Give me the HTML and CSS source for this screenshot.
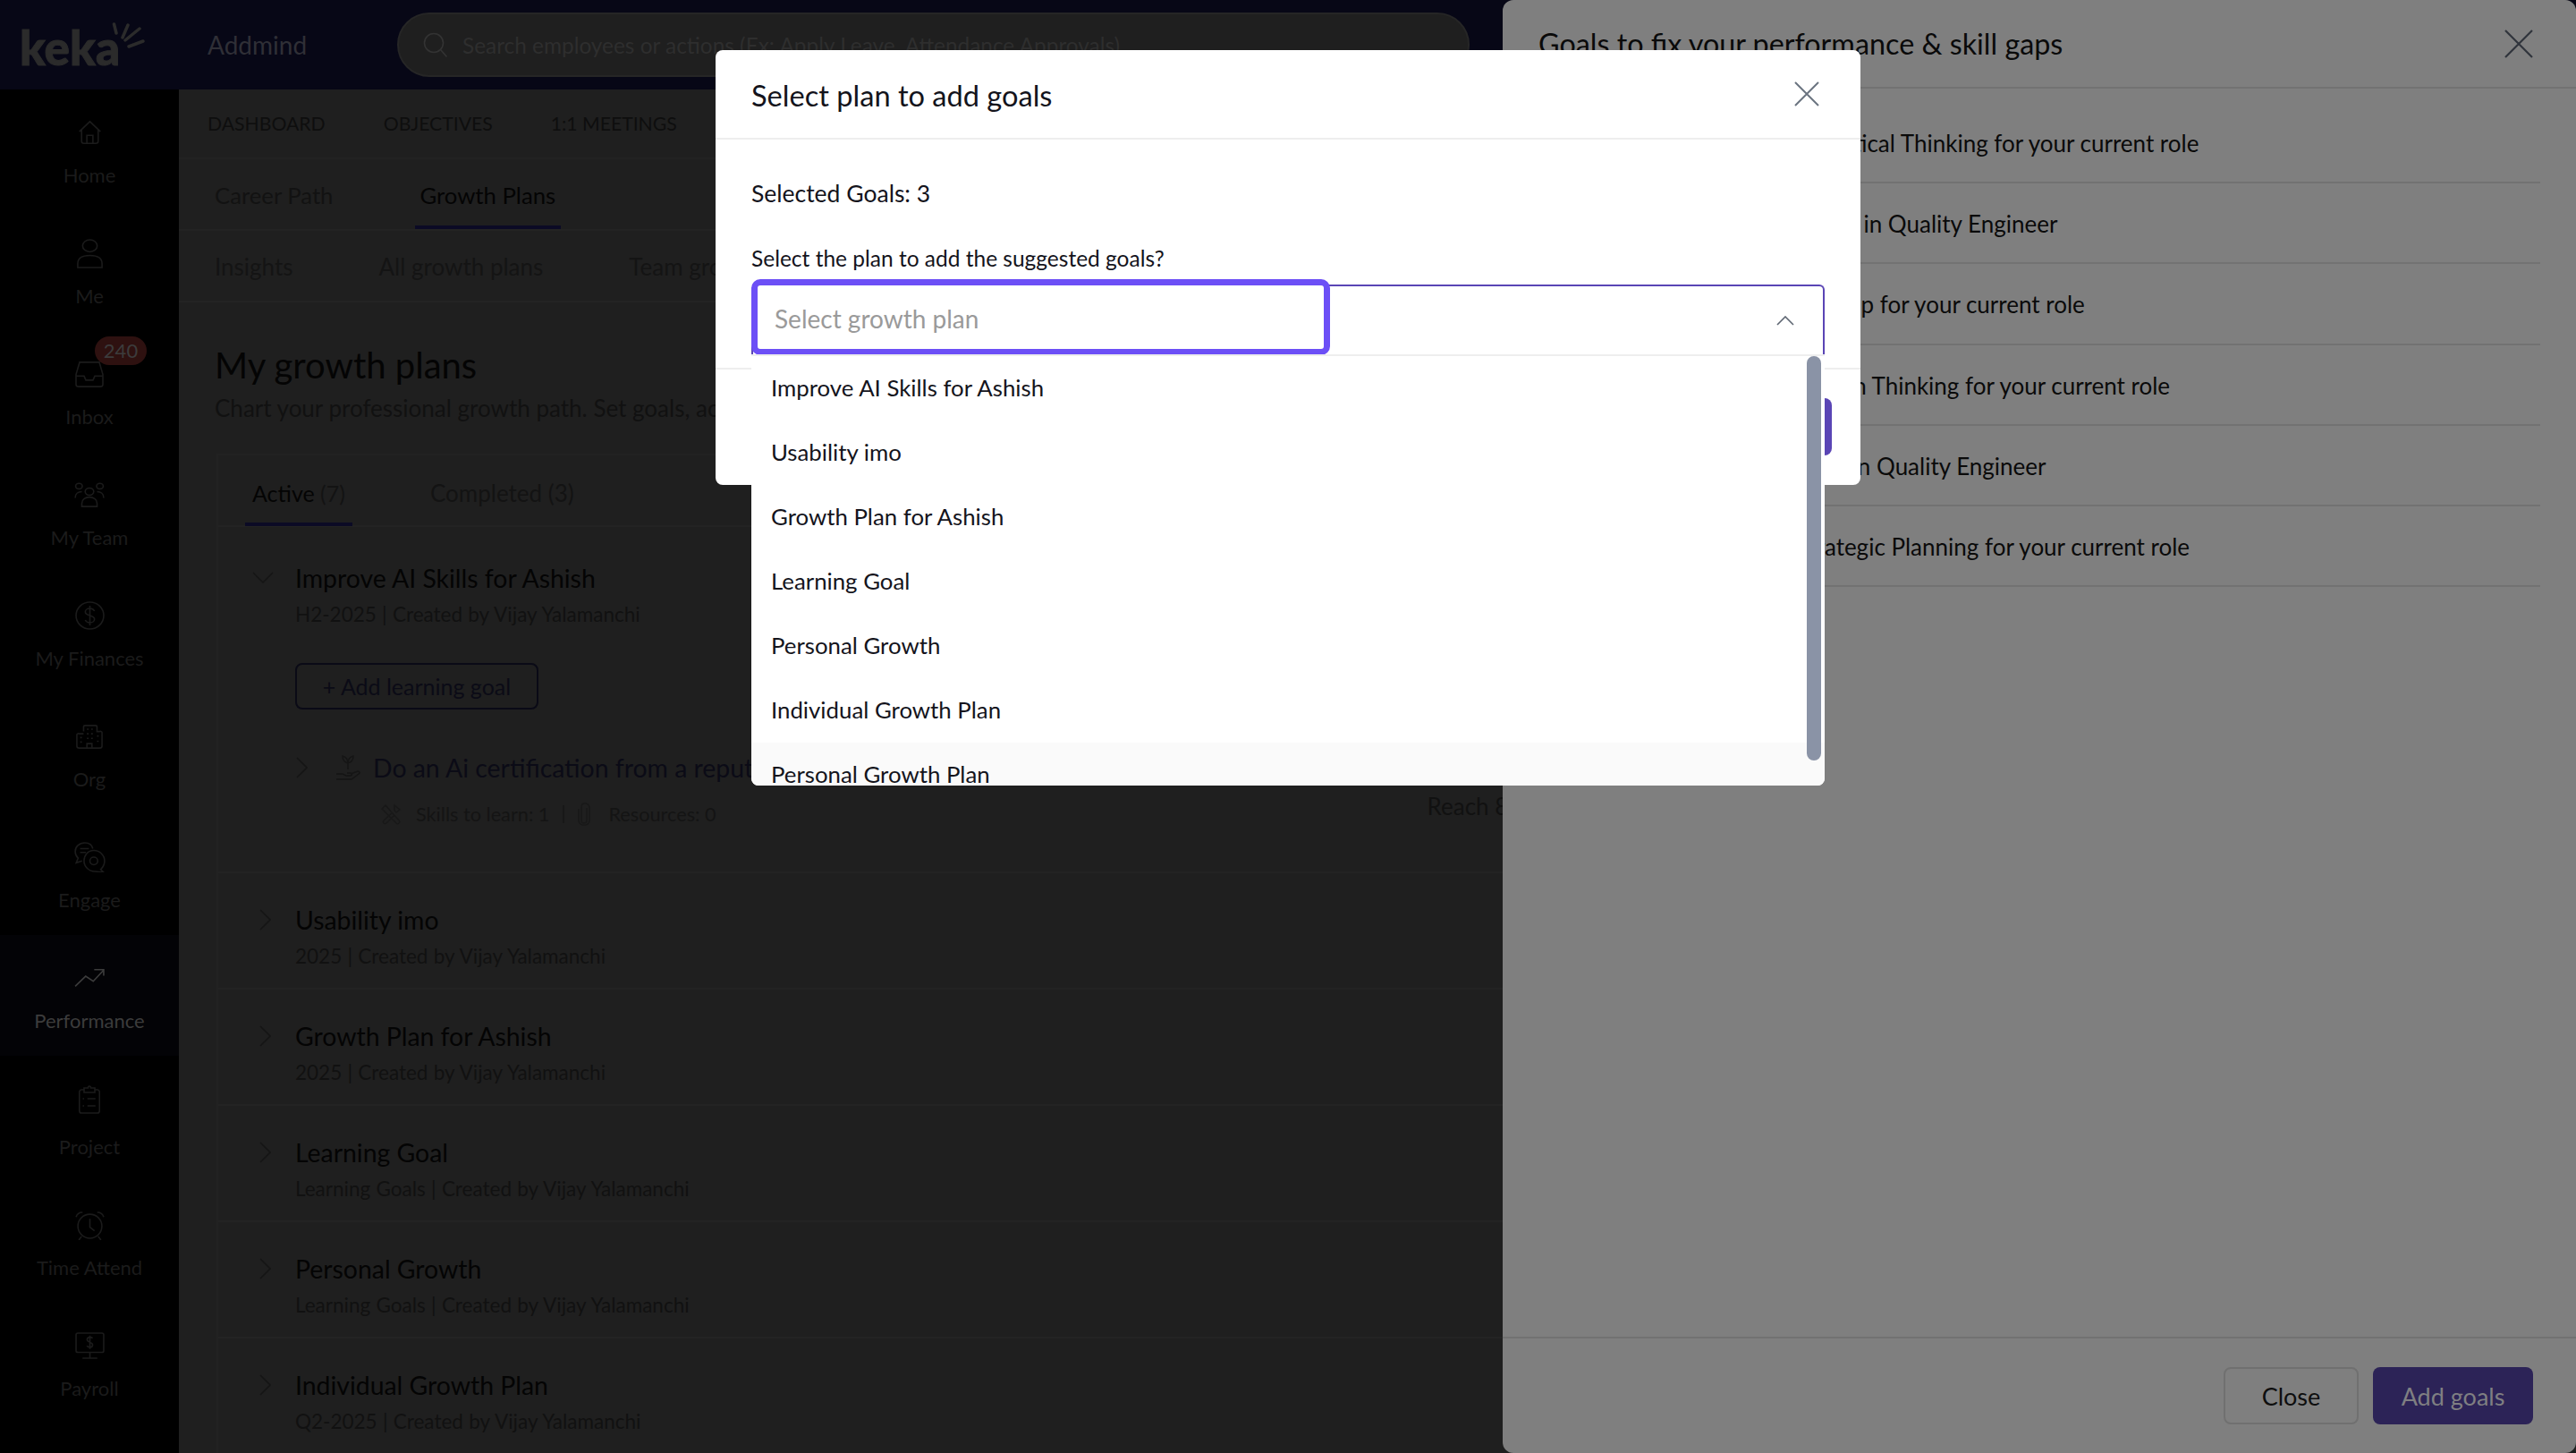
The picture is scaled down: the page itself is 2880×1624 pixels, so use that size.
FILE: index.html
```html
<!DOCTYPE html>
<html lang="en">
<head>
    <meta charset="UTF-8">
    <meta name="viewport" content="width=device-width, initial-scale=1.0">
    <title>Growth Plans</title>
    <link rel="stylesheet" href="styles.css">
</head>
<body>
    <div class="app">
        <header class="topbar">
            <div class="logo">
                <span class="logo-text">keka</span>
                <svg class="logo-rays" viewBox="0 0 38 30" width="38" height="30"><path d="M2.5 2l2.5 10M18 3l-6 14M31 7L15 20M35 21l-16 6"/></svg>
            </div>
            <div class="org-name">Addmind</div>
            <div class="search">
                <svg class="search-icon" viewBox="0 0 28 28" width="28" height="28"><circle cx="12" cy="12" r="10.5"/><path d="M19.5 19.5l7 8"/></svg>
                <span>Search employees or actions (Ex: Apply Leave, Attendance Approvals)</span>
            </div>
        </header>

        <div class="layout">
            <nav class="sidebar">
                <a class="nav-item">
                    <svg class="i-home" viewBox="0 0 32 32" preserveAspectRatio="none"><path d="M2 15L16 1l14 14M5 12v16a3 3 0 0 0 3 3h16a3 3 0 0 0 3-3V12M12 31V20h8v11"/></svg>
                    <span>Home</span>
                </a>
                <a class="nav-item">
                    <svg class="i-me" viewBox="0 0 32 32" preserveAspectRatio="none"><ellipse cx="16" cy="7.5" rx="9" ry="6.5"/><path d="M1 31v-4c0-6 6-9 15-9s15 3 15 9v4z"/></svg>
                    <span>Me</span>
                </a>
                <a class="nav-item">
                    <svg class="i-inbox" viewBox="0 0 32 32" preserveAspectRatio="none"><path d="M5 1h22l4 15v12a3 3 0 0 1-3 3H4a3 3 0 0 1-3-3V16zM1 18h9l2 5h8l2-5h9"/></svg>
                    <span class="badge">240</span>
                    <span>Inbox</span>
                </a>
                <a class="nav-item">
                    <svg class="i-team" viewBox="0 0 32 32" preserveAspectRatio="none"><circle cx="16" cy="12" r="4.5"/><circle cx="5" cy="5" r="3.5"/><circle cx="27" cy="5" r="3.5"/><path d="M8 31v-4c0-5 4-8 8-8s8 3 8 8v4zM1 20c0-5 3-8 7-8M31 20c0-5-3-8-7-8"/></svg>
                    <span>My Team</span>
                </a>
                <a class="nav-item">
                    <svg class="i-money" viewBox="0 0 32 32" preserveAspectRatio="none"><circle cx="16" cy="16" r="15"/><path d="M21 11c-1-2-3-3-5-3-3 0-5 2-5 4s2 3 5 4 5 2 5 4-2 4-5 4c-2 0-4-1-5-3M16 5v22"/></svg>
                    <span>My Finances</span>
                </a>
                <a class="nav-item">
                    <svg class="i-org" viewBox="0 0 32 32" preserveAspectRatio="none"><path d="M9 9V3a2 2 0 0 1 2-2h12a2 2 0 0 1 2 2v6h3a2 2 0 0 1 3 2v17a3 3 0 0 1-3 3H4a3 3 0 0 1-3-3V14a2 2 0 0 1 3-2h5M13 31v-6h6v6M13 6h2M18 6h2M13 12h2M18 12h2M13 18h2M18 18h2M5 17h2M5 23h2M25 15h2M25 22h2"/></svg>
                    <span>Org</span>
                </a>
                <a class="nav-item">
                    <svg class="i-engage" viewBox="0 0 32 32" preserveAspectRatio="none"><path d="M19 7C18 3 15 1 11 1 5 1 1 5 1 10c0 3 1 5 3 7l-2 5 6-2M6 7h9M6 11h6"/><path d="M20 9c6 0 11 5 11 11 0 4-2 7-4 9l3 3-9-1c-6 0-11-5-11-11S14 9 20 9z"/><circle cx="20" cy="20" r="4"/></svg>
                    <span>Engage</span>
                </a>
                <a class="nav-item active">
                    <svg class="i-trend" viewBox="0 0 32 32" preserveAspectRatio="none"><path d="M1 31l11-18 8 9L31 2M21 1h10v11"/></svg>
                    <span>Performance</span>
                </a>
                <a class="nav-item nav-project">
                    <svg class="i-project" viewBox="0 0 32 32" preserveAspectRatio="none"><path d="M8 5H4a3 3 0 0 0-3 2v21a3 3 0 0 0 3 3h24a3 3 0 0 0 3-3V7a3 3 0 0 0-3-2h-4M8 3h6a2 2 0 0 1 4 0h6v5H8zM13 15h12M13 23h12M6 15h2M6 23h2"/></svg>
                    <span>Project</span>
                </a>
                <a class="nav-item">
                    <svg class="i-time" viewBox="0 0 32 32" preserveAspectRatio="none"><circle cx="16" cy="17" r="13"/><path d="M16 9v9l5 4M1 7c1-3 4-5 7-5M31 7c-1-3-4-5-7-5M7 28l-3 4M25 28l3 4"/></svg>
                    <span>Time Attend</span>
                </a>
                <a class="nav-item">
                    <svg class="i-payroll" viewBox="0 0 32 32" preserveAspectRatio="none"><rect x="1" y="1" width="30" height="23" rx="2"/><path d="M16 24v6M8 31h16M19 7c-1-1-2-1-3-1-2 0-3 1-3 3s2 2 3 3 3 1 3 3-1 3-3 3c-1 0-3-1-3-2M16 4v16"/></svg>
                    <span>Payroll</span>
                </a>
            </nav>

            <main class="content">
                <div class="subnav">
                    <a>DASHBOARD</a>
                    <a>OBJECTIVES</a>
                    <a>1:1 MEETINGS</a>
                </div>
                <div class="tabs">
                    <a>Career Path</a>
                    <a class="current">Growth Plans</a>
                </div>
                <div class="tabs-sub">
                    <a>Insights</a>
                    <a>All growth plans</a>
                    <a>Team growth plans</a>
                </div>

                <section class="plans">
                    <h1>My growth plans</h1>
                    <p class="lead">Chart your professional growth path. Set goals, achieve milestones and track your progress over time.</p>

                    <div class="card">
                        <div class="card-tabs">
                            <a class="current">Active <em>(7)</em></a>
                            <a>Completed (3)</a>
                        </div>

                        <div class="plan plan-open">
                            <div class="plan-chev"><svg class="chev-down" viewBox="0 0 24 13"><path d="M1 1l11 11L23 1"/></svg></div>
                            <div class="plan-body">
                                <h2>Improve AI Skills for Ashish</h2>
                                <p>H2-2025 | Created by Vijay Yalamanchi</p>
                                <button class="add-btn">+ Add learning goal</button>
                                <div class="goal-row">
                                    <svg class="chev-right" viewBox="0 0 13 24"><path d="M1 1l11 11L1 23"/></svg>
                                    <svg class="plant" viewBox="0 0 28 28"><path d="M14 16V6M14 9c0-4-2-7-6-8 0 4 2 7 6 8zM14 9c0-4 2-7 6-8 0 4-2 7-6 8zM1 21h7l4 2h5c2 0 2-3 0-3h-4M17 21l8-3c2 0 3 2 1 3l-8 6H1"/></svg>
                                    <span>Do an Ai certification from a reputed institute</span>
                                </div>
                                <div class="goal-meta">
                                    <svg viewBox="0 0 24 24"><path d="M2 6l4-4 15 17a2 2 0 0 1-3 3zM16 2l6 5-4 3-2-2zM14 10L4 19a2 2 0 0 0 3 3l9-9"/></svg>
                                    <span>Skills to learn: 1</span>
                                    <i class="meta-sep"></i>
                                    <svg class="clip" viewBox="0 0 14 26"><path d="M10 6v14a3 3 0 0 1-6 0V5a4 4 0 0 1 3-4 5 5 0 0 1 6 4v16a5 5 0 0 1-6 4 5 5 0 0 1-6-4V7"/></svg>
                                    <span>Resources: 0</span>
                                    <span class="reach">Reach 80% progress</span>
                                </div>
                            </div>
                        </div>

                        <div class="plan">
                            <div class="plan-chev"><svg class="chev-right" viewBox="0 0 13 24"><path d="M1 1l11 11L1 23"/></svg></div>
                            <div class="plan-body"><h2>Usability imo</h2><p>2025 | Created by Vijay Yalamanchi</p></div>
                        </div>
                        <div class="plan">
                            <div class="plan-chev"><svg class="chev-right" viewBox="0 0 13 24"><path d="M1 1l11 11L1 23"/></svg></div>
                            <div class="plan-body"><h2>Growth Plan for Ashish</h2><p>2025 | Created by Vijay Yalamanchi</p></div>
                        </div>
                        <div class="plan">
                            <div class="plan-chev"><svg class="chev-right" viewBox="0 0 13 24"><path d="M1 1l11 11L1 23"/></svg></div>
                            <div class="plan-body"><h2>Learning Goal</h2><p>Learning Goals | Created by Vijay Yalamanchi</p></div>
                        </div>
                        <div class="plan">
                            <div class="plan-chev"><svg class="chev-right" viewBox="0 0 13 24"><path d="M1 1l11 11L1 23"/></svg></div>
                            <div class="plan-body"><h2>Personal Growth</h2><p>Learning Goals | Created by Vijay Yalamanchi</p></div>
                        </div>
                        <div class="plan">
                            <div class="plan-chev"><svg class="chev-right" viewBox="0 0 13 24"><path d="M1 1l11 11L1 23"/></svg></div>
                            <div class="plan-body"><h2>Individual Growth Plan</h2><p>Q2-2025 | Created by Vijay Yalamanchi</p></div>
                        </div>
                    </div>
                </section>
            </main>
        </div>
    </div>

    <aside class="panel">
        <div class="panel-head">
            <h3>Goals to fix your performance &amp; skill gaps</h3>
            <svg class="panel-close" viewBox="0 0 32 32"><path d="M1 1l30 30M31 1L1 31"/></svg>
        </div>
        <ul class="goal-list">
            <li>Improve Analytical Thinking for your current role</li>
            <li>Build deeper expertise in Quality Engineer</li>
            <li>Improve Leadership for your current role</li>
            <li>Improve Design Thinking for your current role</li>
            <li>Gain certification in Quality Engineer</li>
            <li>Improve Strategic Planning for your current role</li>
        </ul>
        <div class="panel-foot">
            <button class="btn-outline">Close</button>
            <button class="btn-dark">Add goals</button>
        </div>
    </aside>

    <div class="modal">
        <div class="modal-head">
            <h4>Select plan to add goals</h4>
            <svg class="modal-close" viewBox="0 0 28 28"><path d="M1 1l26 26M27 1L1 27"/></svg>
        </div>
        <div class="modal-body">
            <p class="selected">Selected Goals: 3</p>
            <label>Select the plan to add the suggested goals?</label>
            <div class="select">
                <div class="select-box">
                    <span class="select-focus">Select growth plan</span>
                    <svg class="select-arrow" viewBox="0 0 20 11"><path d="M1 10l9-9 9 9"/></svg>
                </div>
                <div class="select-menu">
                    <div class="option">Improve AI Skills for Ashish</div>
                    <div class="option">Usability imo</div>
                    <div class="option">Growth Plan for Ashish</div>
                    <div class="option">Learning Goal</div>
                    <div class="option">Personal Growth</div>
                    <div class="option">Individual Growth Plan</div>
                    <div class="option hover">Personal Growth Plan</div>
                    <div class="scroll-thumb"></div>
                </div>
            </div>
        </div>
        <div class="modal-foot">
            <button class="modal-save">Add</button>
        </div>
    </div>
</body>
</html>
```

FILE: styles.css
```css
* {
    box-sizing: border-box;
    margin: 0;
    padding: 0;
    font-family: 'Lato', 'Liberation Sans', sans-serif;
}

html, body {
    height: 100%;
    overflow: hidden;
    background: #000;
}

body {
    position: relative;
    width: 2880px;
    height: 1624px;
}

svg {
    fill: none;
    stroke: currentColor;
    stroke-width: 2;
}

/* top bar */
.app {
    display: flex;
    flex-direction: column;
    height: 100%;
}

.topbar {
    display: flex;
    align-items: center;
    height: 100px;
    flex: none;
    background: #070716;
}

.logo {
    position: relative;
    width: 232px;
    padding-left: 22px;
}

.logo-text {
    font-size: 53px;
    font-weight: 900;
    line-height: 48px;
    color: #2b2b2b;
    -webkit-text-stroke: 1px #2b2b2b;
    position: relative;
    top: 3px;
}

.logo-rays {
    position: absolute;
    left: 125px;
    top: -1px;
    color: #2b2b2b;
    stroke-width: 3.5;
    stroke-linecap: round;
}

.org-name {
    width: 212px;
    font-size: 28px;
    color: #2f2f36;
}

.search {
    display: flex;
    align-items: center;
    gap: 16px;
    width: 1199px;
    height: 72px;
    padding-left: 27px;
    background: #1f1f1f;
    border: 2px solid #262626;
    border-radius: 36px;
    font-size: 24.4px;
    color: #2e2e2e;
}

.search-icon {
    color: #333;
    stroke-width: 1.6;
}

/* sidebar */
.layout {
    display: flex;
    flex: 1;
    min-height: 0;
}

.sidebar {
    width: 200px;
    flex: none;
    background: #000;
}

.nav-item {
    --gap: 15px;
    position: relative;
    display: flex;
    flex-direction: column;
    align-items: center;
    height: 135px;
    padding-top: 30px;
    color: #1b1b1b;
    font-size: 22px;
    line-height: 30px;
}

.nav-item svg {
    width: var(--w);
    height: var(--h);
    margin: calc((36px - var(--h)) / 2) 0 calc(var(--gap) + (36px - var(--h)) / 2);
}

.nav-item svg * {
    vector-effect: non-scaling-stroke;
    stroke-width: 1.6px;
}

.i-home { --w: 27px; --h: 26px; }
.i-me { --w: 29px; --h: 33px; }
.i-inbox { --w: 32px; --h: 29px; }
.i-team { --w: 34px; --h: 28px; }
.i-money { --w: 33px; --h: 32px; }
.i-org { --w: 30px; --h: 27px; }
.i-engage { --w: 35px; --h: 34px; }
.i-trend { --w: 34px; --h: 20px; }
.i-project { --w: 24px; --h: 32px; }
.i-time { --w: 33px; --h: 33px; }
.i-payroll { --w: 33px; --h: 30px; }

.nav-item.active {
    background: #030306;
    color: #3c3c3c;
    margin-bottom: 6px;
}

.nav-project {
    --gap: 20px;
    padding-top: 25px;
}

.badge {
    position: absolute;
    left: 106px;
    top: 6px;
    width: 58px;
    height: 32px;
    border-radius: 16px;
    background: #2e1110;
    color: #3c3c3c;
    font-size: 22px;
    line-height: 32px;
    text-align: center;
}

/* main column */
.content {
    flex: 1;
    min-width: 0;
    background: #1f1f1f;
    overflow: hidden;
}

.subnav {
    display: flex;
    align-items: center;
    gap: 65px;
    height: 78px;
    padding-left: 32px;
    border-bottom: 2px solid #222;
    font-size: 21.2px;
    color: #0e0e0e;
}

.tabs {
    display: flex;
    gap: 97px;
    height: 80px;
    padding-left: 40px;
    border-bottom: 2px solid #232323;
    font-size: 25.7px;
    line-height: 80px;
    color: #121212;
}

.tabs a.current {
    position: relative;
    color: #040404;
}

.tabs a.current::after {
    content: "";
    position: absolute;
    left: -5px;
    right: -6px;
    bottom: 0;
    height: 4px;
    background: #0b0a25;
}

.tabs-sub {
    display: flex;
    gap: 96px;
    height: 80px;
    padding-left: 40px;
    border-bottom: 2px solid #232323;
    font-size: 26px;
    line-height: 80px;
    color: #141414;
}

.plans {
    padding: 48px 0 0 40px;
}

h1 {
    font-size: 40px;
    font-weight: 400;
    line-height: 44px;
    color: #040404;
}

.lead {
    margin-top: 10px;
    font-size: 26px;
    line-height: 32px;
    white-space: nowrap;
    color: #111;
}

.card {
    margin: 35px 0 0 2px;
    border: 2px solid #222;
    border-right: 0;
    border-bottom: 0;
}

.card-tabs {
    display: flex;
    gap: 95px;
    height: 80px;
    padding-left: 38px;
    border-bottom: 2px solid #232323;
    font-size: 26px;
    line-height: 84px;
    color: #131313;
}

.card-tabs a.current {
    position: relative;
    font-size: 25px;
    color: #040404;
}

.card-tabs a em {
    font-style: normal;
    color: #131313;
}

.card-tabs a.current::after {
    content: "";
    position: absolute;
    left: -8px;
    right: -8px;
    bottom: -1px;
    height: 4px;
    background: #0b0a25;
}

.plan {
    display: flex;
    height: 130px;
    padding-top: 34px;
    border-bottom: 2px solid #232323;
}

.plan:last-child {
    border-bottom: 0;
}

.plan-open {
    height: 387px;
    padding-top: 39px;
}

.plan-chev {
    display: flex;
    justify-content: center;
    align-items: flex-start;
    width: 32px;
    height: 36px;
    margin: 0 18px 0 36px;
    padding-top: 6px;
    color: #151515;
}

.chev-right {
    width: 13px;
    height: 24px;
    stroke-width: 1.6;
}

.chev-down {
    width: 24px;
    height: 13px;
    margin: 5px 4px 0 0;
    stroke-width: 1.6;
}

.plan-body h2 {
    font-size: 28.4px;
    font-weight: 400;
    line-height: 36px;
    color: #040404;
}

.plan-body p {
    margin-top: 8px;
    font-size: 22.5px;
    line-height: 30px;
    word-spacing: 0.5px;
    color: #111;
}

.add-btn {
    display: block;
    width: 272px;
    height: 52px;
    margin-top: 39px;
    background: none;
    border: 2px solid #0a0a16;
    border-radius: 8px;
    font-size: 25px;
    color: #0b0b16;
}

.goal-row {
    display: flex;
    align-items: center;
    height: 36px;
    margin-top: 47px;
    font-size: 28.4px;
    white-space: nowrap;
    color: #0b0b16;
}

.goal-row .chev-right {
    margin: 0 31px 0 1px;
    color: #151515;
}

.plant {
    width: 28px;
    height: 28px;
    margin-right: 14px;
    color: #151515;
    stroke-width: 1.4;
}

.goal-meta {
    display: flex;
    align-items: center;
    height: 30px;
    margin-top: 19px;
    padding-left: 95px;
    font-size: 21.7px;
    white-space: nowrap;
    color: #141414;
}

.goal-meta svg {
    width: 24px;
    height: 24px;
    margin-right: 16px;
    stroke-width: 1.4;
    color: #181818;
}

.goal-meta svg.clip {
    width: 14px;
    height: 26px;
    margin-right: 20px;
}

.meta-sep {
    width: 2px;
    height: 20px;
    margin: 0 15px;
    background: #181818;
}

.reach {
    margin: -18px 0 0 795px;
    font-size: 26px;
    color: #111;
}

/* right slide panel */
.panel {
    position: absolute;
    top: 0;
    right: 0;
    bottom: 0;
    width: 1200px;
    display: flex;
    flex-direction: column;
    background: #7f7f7f;
    border-radius: 12px;
}

.panel-head {
    display: flex;
    justify-content: space-between;
    align-items: center;
    height: 99px;
    flex: none;
    padding: 0 48px 0 40px;
    border-bottom: 2px solid #727272;
}

.panel-head h3 {
    font-size: 32.3px;
    font-weight: 400;
    color: #0a0a0a;
}

.panel-close {
    width: 32px;
    height: 32px;
    color: #30343c;
    stroke-width: 2.2;
}

.goal-list {
    flex: 1;
    padding: 16px 40px 0;
    list-style: none;
}

.goal-list li {
    height: 90.2px;
    padding-left: 188px;
    border-bottom: 2px solid #727272;
    font-size: 26px;
    line-height: 90px;
    white-space: nowrap;
    color: #0a0a0a;
}

.goal-list li:nth-child(2) {
    padding-left: 101px;
}

.goal-list li:nth-child(3) {
    padding-left: 152px;
}

.goal-list li:nth-child(5) {
    padding-left: 148px;
}

.panel-foot {
    display: flex;
    justify-content: flex-end;
    gap: 16px;
    height: 130px;
    flex: none;
    padding: 32px 48px 0 0;
    border-top: 2px solid #727272;
}

.panel-foot button {
    height: 64px;
    border-radius: 8px;
    font-size: 27px;
}

.btn-outline {
    width: 151px;
    background: none;
    border: 2px solid #707070;
    color: #0e0e0e;
}

.btn-dark {
    width: 179px;
    background: #2c2357;
    border: none;
    color: #7f7f82;
}

/* plan picker modal */
.modal {
    position: absolute;
    left: 800px;
    top: 56px;
    width: 1280px;
    height: 486px;
    background: #fff;
    border-radius: 8px;
}

.modal-head {
    display: flex;
    justify-content: space-between;
    align-items: center;
    height: 100px;
    padding: 0 46px 0 40px;
    border-bottom: 2px solid #eee;
}

.modal-head h4 {
    padding-top: 2px;
    font-size: 32.6px;
    font-weight: 400;
    color: #14141c;
}

.modal-close {
    width: 28px;
    height: 28px;
    color: #6b7480;
}

.modal-body {
    height: 257px;
    padding: 44px 40px 0;
    border-bottom: 2px solid #eee;
}

.selected {
    font-size: 26.5px;
    line-height: 32px;
    color: #14141c;
}

.modal-body label {
    display: block;
    margin-top: 41px;
    font-size: 24.5px;
    line-height: 32px;
    color: #14141c;
}

.select {
    position: relative;
    margin-top: 13px;
}

.select-box {
    display: flex;
    align-items: center;
    justify-content: space-between;
    height: 78px;
    padding-right: 32px;
    background: #fff;
    border: 2px solid #5a45b5;
    border-bottom: 0;
    border-radius: 6px 6px 0 0;
}

.select-focus {
    position: absolute;
    left: 0;
    top: -6px;
    width: 647px;
    height: 85px;
    padding-left: 19px;
    background: #fff;
    border: 7px solid #6c4ff6;
    border-radius: 10px;
    font-size: 28px;
    line-height: 74px;
    color: #9a9a9a;
}

.select-arrow {
    margin-left: auto;
    width: 20px;
    height: 11px;
    color: #5e6672;
    stroke-width: 1.6;
}

.select-menu {
    position: absolute;
    left: 0;
    right: 0;
    top: 78px;
    height: 482px;
    overflow: hidden;
    background: #fff;
    border-top: 2px solid #eee;
    border-radius: 0 0 8px 8px;
    z-index: 2;
}

.option {
    height: 72px;
    padding-left: 22px;
    font-size: 25.8px;
    line-height: 70px;
    color: #14141c;
}

.option.hover {
    background: #fafafa;
}

.scroll-thumb {
    position: absolute;
    top: 0;
    right: 4px;
    width: 16px;
    height: 452px;
    border-radius: 8px;
    background: #8a93a6;
}

.modal-foot {
    display: flex;
    justify-content: flex-end;
    padding: 32px 32px 0 0;
}

.modal-save {
    width: 160px;
    height: 64px;
    background: #5a45b5;
    border: none;
    border-radius: 8px;
    color: #fff;
    font-size: 28px;
}
```
